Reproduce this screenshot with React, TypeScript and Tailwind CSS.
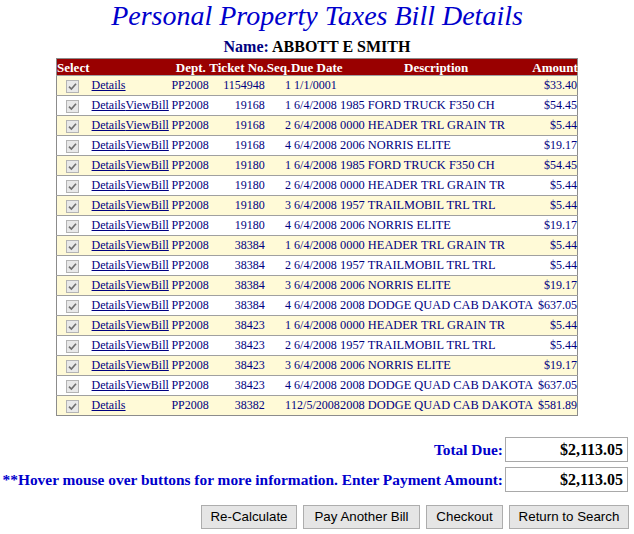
type BillLine = {
  viewBill: boolean;
  ticket: string;
  seq: string;
  due: string;
  desc: string;
  amount: string;
};

const lines: BillLine[] = [
  { viewBill: false, ticket: "1154948", seq: "1", due: "1/1/0001", desc: "", amount: "$33.40" },
  { viewBill: true, ticket: "19168", seq: "1", due: "6/4/2008", desc: "1985 FORD TRUCK F350 CH", amount: "$54.45" },
  { viewBill: true, ticket: "19168", seq: "2", due: "6/4/2008", desc: "0000 HEADER TRL GRAIN TR", amount: "$5.44" },
  { viewBill: true, ticket: "19168", seq: "4", due: "6/4/2008", desc: "2006 NORRIS ELITE", amount: "$19.17" },
  { viewBill: true, ticket: "19180", seq: "1", due: "6/4/2008", desc: "1985 FORD TRUCK F350 CH", amount: "$54.45" },
  { viewBill: true, ticket: "19180", seq: "2", due: "6/4/2008", desc: "0000 HEADER TRL GRAIN TR", amount: "$5.44" },
  { viewBill: true, ticket: "19180", seq: "3", due: "6/4/2008", desc: "1957 TRAILMOBIL TRL TRL", amount: "$5.44" },
  { viewBill: true, ticket: "19180", seq: "4", due: "6/4/2008", desc: "2006 NORRIS ELITE", amount: "$19.17" },
  { viewBill: true, ticket: "38384", seq: "1", due: "6/4/2008", desc: "0000 HEADER TRL GRAIN TR", amount: "$5.44" },
  { viewBill: true, ticket: "38384", seq: "2", due: "6/4/2008", desc: "1957 TRAILMOBIL TRL TRL", amount: "$5.44" },
  { viewBill: true, ticket: "38384", seq: "3", due: "6/4/2008", desc: "2006 NORRIS ELITE", amount: "$19.17" },
  { viewBill: true, ticket: "38384", seq: "4", due: "6/4/2008", desc: "2008 DODGE QUAD CAB DAKOTA", amount: "$637.05" },
  { viewBill: true, ticket: "38423", seq: "1", due: "6/4/2008", desc: "0000 HEADER TRL GRAIN TR", amount: "$5.44" },
  { viewBill: true, ticket: "38423", seq: "2", due: "6/4/2008", desc: "1957 TRAILMOBIL TRL TRL", amount: "$5.44" },
  { viewBill: true, ticket: "38423", seq: "3", due: "6/4/2008", desc: "2006 NORRIS ELITE", amount: "$19.17" },
  { viewBill: true, ticket: "38423", seq: "4", due: "6/4/2008", desc: "2008 DODGE QUAD CAB DAKOTA", amount: "$637.05" },
  { viewBill: false, ticket: "38382", seq: "1", due: "12/5/2008", desc: "2008 DODGE QUAD CAB DAKOTA", amount: "$581.89" },
];

const buttons = [
  { label: "Re-Calculate", w: "w-[96px]" },
  { label: "Pay Another Bill", w: "w-[117px]" },
  { label: "Checkout", w: "w-[77px]" },
  { label: "Return to Search", w: "w-[120px]" },
];

// greyed-out ticked box, every line is preselected
const CheckedBox = () => (
  <span className="inline-flex w-[13px] h-[13px] border border-[#b4b4b4] bg-[#e9e9e9] items-center justify-center align-middle">
    <svg width="9" height="9" viewBox="0 0 9 9">
      <path d="M1 4.6 L3.4 7 L8 1.8" fill="none" stroke="#707070" strokeWidth="1.7" />
    </svg>
  </span>
);

export default function App() {
  return (
    <div className="w-[634px] h-[534px] bg-white [font-family:Liberation_Serif,serif] overflow-hidden">
      <h1 className="text-center italic text-[28px] leading-[32px] text-[#0000cc]">
        Personal Property Taxes Bill Details
      </h1>
      <div className="mt-[6px] text-center text-[16px] leading-[18px] font-bold">
        <span className="text-[#000080]">Name: </span>
        <span className="text-black">ABBOTT E SMITH</span>
      </div>

      {/* bill lines */}
      <table className="mt-[2px] mx-auto w-[522px] table-fixed border-collapse border border-[#8c8c8c] text-[12px] leading-[15px] text-[#000080]">
        <colgroup>
          <col className="w-[32px]" />
          <col className="w-[80px]" />
          <col className="w-[40px]" />
          <col className="w-[58px]" />
          <col className="w-[24px]" />
          <col className="w-[49px]" />
          <col className="w-[192px]" />
          <col className="w-[45px]" />
        </colgroup>
        <thead>
          <tr className="bg-[#990000] text-white font-bold text-[13px] h-[17px]">
            <th className="p-0 text-left whitespace-nowrap">Select</th>
            <th className="p-0"></th>
            <th className="p-0 text-right pr-[3px] whitespace-nowrap">Dept.</th>
            <th className="p-0 text-right whitespace-nowrap">Ticket No.</th>
            <th className="p-0 text-left whitespace-nowrap">Seq.</th>
            <th className="p-0 text-left whitespace-nowrap">Due Date</th>
            <th className="p-0 text-center whitespace-nowrap">Description</th>
            <th className="p-0 text-right whitespace-nowrap">Amount</th>
          </tr>
        </thead>
        <tbody>
          {lines.map((l, i) => (
            <tr
              key={i}
              className={`h-[20px] border-t border-[#a0a0a0] ${i % 2 === 0 ? "bg-[#fffad7]" : "bg-white"}`}
            >
              <td className="p-0 text-center align-middle">
                <CheckedBox />
              </td>
              <td className="p-0 pl-[3px] whitespace-nowrap">
                <a href="#" className="underline text-[#000080]">Details</a>
                {l.viewBill && <a href="#" className="underline text-[#000080]">ViewBill</a>}
              </td>
              <td className="p-0 text-right whitespace-nowrap">PP2008</td>
              <td className="p-0 text-right pr-[2px] whitespace-nowrap">{l.ticket}</td>
              <td className="p-0 text-right whitespace-nowrap">{l.seq}</td>
              <td className="p-0 text-center whitespace-nowrap">{l.due}</td>
              <td className="p-0 text-left text-[12.4px] whitespace-nowrap">{l.desc}</td>
              <td className="p-0 text-right whitespace-nowrap">{l.amount}</td>
            </tr>
          ))}
        </tbody>
      </table>

      {/* totals */}
      <div className="mt-[21px] pr-[6px] flex flex-col items-end gap-[5px] font-bold text-[15.4px]">
        <div className="flex items-center">
          <span className="text-[#0000cc]">Total Due:</span>
          <div className="ml-[2px] w-[123px] h-[25px] border border-[#a9a9a9] flex items-center justify-end pr-[4px] text-[16px] text-black">
            $2,113.05
          </div>
        </div>
        <div className="flex items-center">
          <span className="text-[#0000cc] whitespace-nowrap">
            **Hover mouse over buttons for more information. Enter Payment Amount:
          </span>
          <div className="ml-[2px] w-[123px] h-[25px] border border-[#a9a9a9] flex items-center justify-end pr-[4px] text-[16px] text-black">
            $2,113.05
          </div>
        </div>
      </div>

      <div className="mt-[13px] pr-[5px] flex justify-end gap-[6px]">
        {buttons.map((b) => (
          <button
            key={b.label}
            className={`${b.w} h-[24px] bg-[#e5e5e5] border border-[#adadad] text-[13.33px] text-black [font-family:Liberation_Sans,Arial,sans-serif]`}
          >
            {b.label}
          </button>
        ))}
      </div>
    </div>
  );
}
